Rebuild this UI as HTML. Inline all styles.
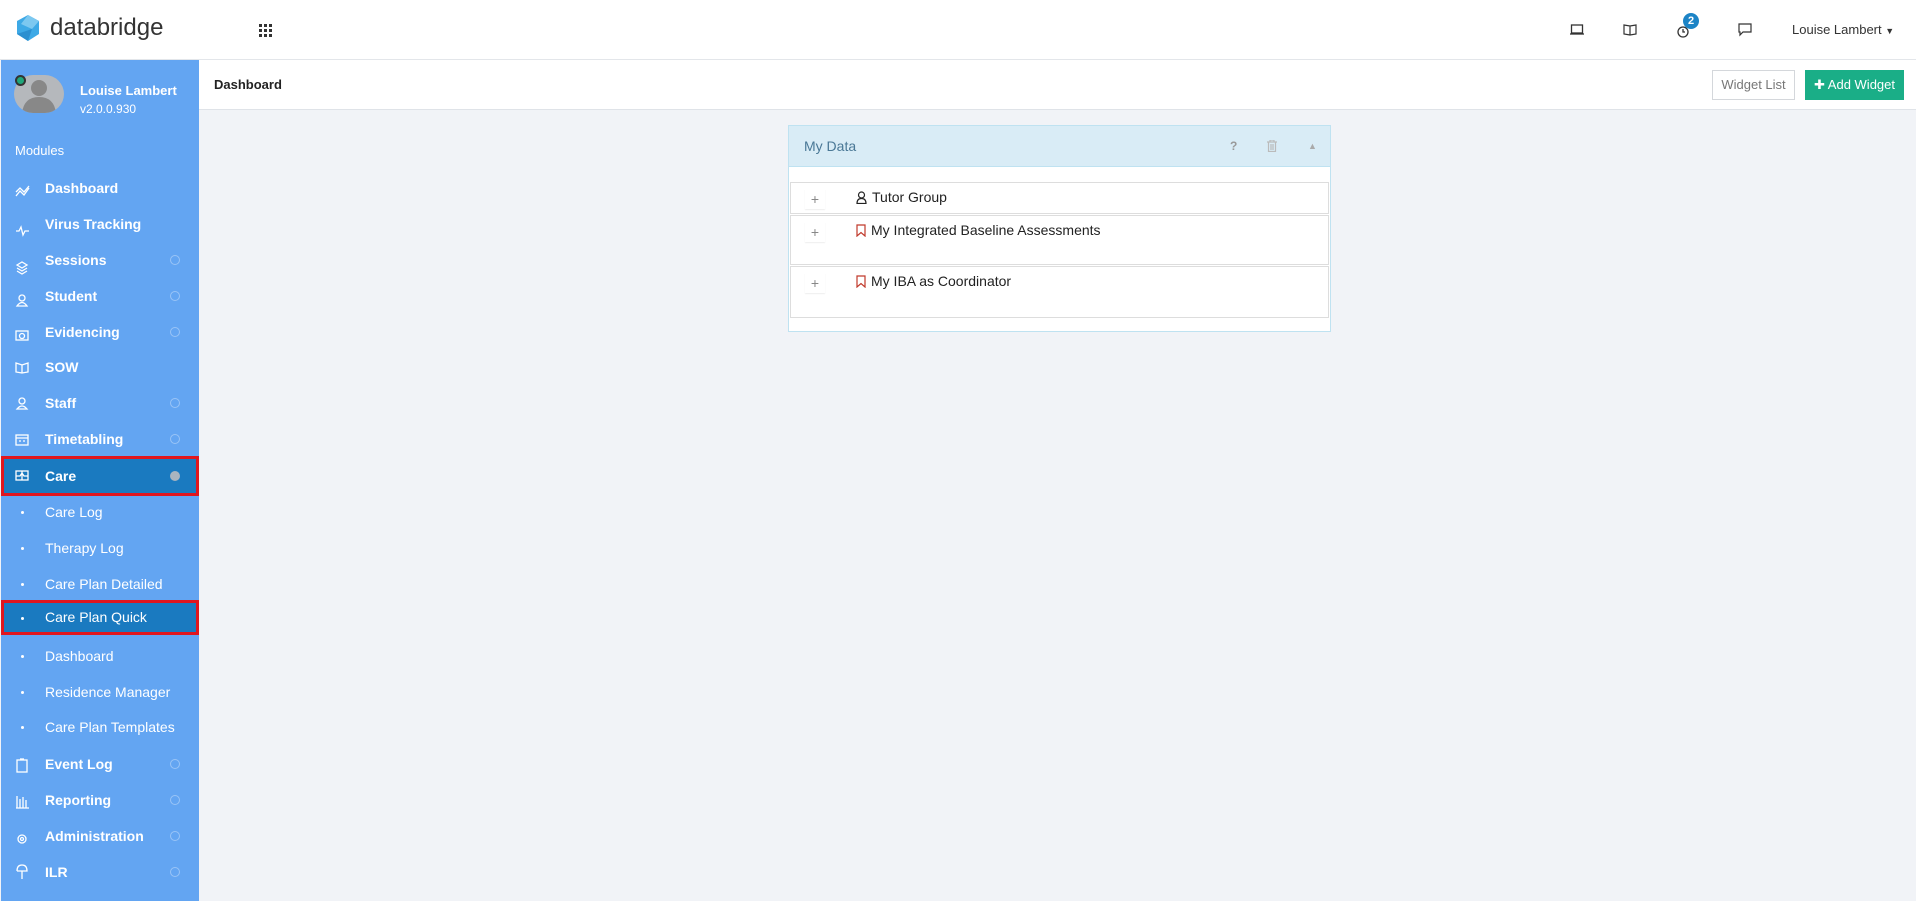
<!DOCTYPE html>
<html><head><meta charset="utf-8"><style>
*{box-sizing:border-box;margin:0;padding:0}
body{width:1916px;height:901px;overflow:hidden;background:#f1f3f7;font-family:"Liberation Sans",sans-serif;position:relative}
.top{position:absolute;left:0;top:0;width:1916px;height:60px;background:#fff;border-bottom:1px solid #e3e6ea}
.logo{position:absolute;left:17px;top:15px}
.brand{position:absolute;left:50px;top:14px;font-size:24px;color:#333}
.grid{position:absolute;left:259px;top:24px}
.side{position:absolute;left:1px;top:60px;width:198px;height:841px;background:#63a5f2;color:#fff}
.av{position:absolute;left:13px;top:15px;width:50px;height:38px;border-radius:19px;background:#b5b8bc;overflow:hidden}
.dot{position:absolute;left:14px;top:15px;width:11px;height:11px;border-radius:50%;background:#1fa67a;border:2px solid #333}
.uname{position:absolute;left:79px;top:23px;font-weight:bold;font-size:13px}
.ver{position:absolute;left:79px;top:42px;font-size:12px}
.mod{position:absolute;left:14px;top:83px;font-size:13px}
.it{position:absolute;left:0;width:198px;height:36px;line-height:36px;font-size:14px;font-weight:bold}
.it .t{position:absolute;left:44px}
.it .c{position:absolute;left:169px;top:13px;width:10px;height:10px;border-radius:50%;border:1px solid rgba(255,255,255,.35)}
.sub{font-weight:normal}
.sub .b{position:absolute;left:20px;top:17px;width:3px;height:3px;border-radius:50%;background:#fff}
.hl{background:#1a7ac0;outline:3px solid #e0161e;outline-offset:-3px}
.ph{position:absolute;left:199px;top:60px;width:1717px;height:50px;background:#fff;border-bottom:1px solid #dfe3e8}
.ph h1{position:absolute;left:15px;top:17px;font-size:13px;font-weight:bold;color:#222}
.btn1{position:absolute;left:1513px;top:10px;width:83px;height:30px;border:1px solid #d4d7db;background:#fff;color:#777;font-size:13px;text-align:center;line-height:28px}
.btn2{position:absolute;left:1606px;top:10px;width:99px;height:30px;background:#1aae87;color:#fff;font-size:13px;text-align:center;line-height:30px}
.w{position:absolute;left:788px;top:125px;width:543px;height:207px;background:#fff;border:1px solid #bfe2f1}
.wh{height:41px;background:#d9ecf6;border-bottom:1px solid #bfe2f1;font-size:14px;color:#4a7896;line-height:40px;padding-left:15px;position:relative}
.row{position:absolute;left:1px;width:539px;border:1px solid #ddd;background:#fff;font-size:14px;color:#222}
.pl{position:absolute;left:14px;top:6px;width:20px;height:20px;color:#888;font-size:14px;text-align:center;line-height:20px;box-shadow:0 1px 1px #eee}
.rt{position:absolute;left:65px;top:6px}
.rt svg{vertical-align:-2px;margin-right:5px}
</style></head><body>
<div class="top">
<svg class="logo" width="22" height="26" viewBox="0 0 22 26"><polygon points="11,0 22,6 22,19 11,26 0,19 0,6" fill="#3da9e6"/><polygon points="11,0 22,6 15,14 4,9" fill="#7cc8f0"/><polygon points="0,19 11,26 15,14" fill="#2b8fd0"/></svg>
<div class="brand">databridge</div>
<svg class="grid" width="14" height="14" viewBox="0 0 14 14" fill="#333"><rect x="0" y="0" width="3" height="3"/><rect x="5" y="0" width="3" height="3"/><rect x="10" y="0" width="3" height="3"/><rect x="0" y="5" width="3" height="3"/><rect x="5" y="5" width="3" height="3"/><rect x="10" y="5" width="3" height="3"/><rect x="0" y="10" width="3" height="3"/><rect x="5" y="10" width="3" height="3"/><rect x="10" y="10" width="3" height="3"/></svg>
<svg style="position:absolute;left:1570px;top:24px" width="14" height="11" fill="none" stroke="#333" stroke-width="1.3"><rect x="1.5" y="1" width="11" height="8"/><line x1="0" y1="10" x2="14" y2="10"/></svg>
<svg style="position:absolute;left:1623px;top:23px" width="14" height="13" fill="none" stroke="#333" stroke-width="1.2"><path d="M1 2L7 3L13 2V11L7 12L1 11Z M7 3V12"/></svg>
<svg style="position:absolute;left:1676px;top:24px" width="14" height="14" fill="none" stroke="#333" stroke-width="1.3"><circle cx="7" cy="8" r="5"/><path d="M7 5V8H9"/></svg>
<div style="position:absolute;left:1683px;top:13px;width:16px;height:16px;border-radius:50%;background:#1c84c6;color:#fff;font-size:11px;font-weight:bold;text-align:center;line-height:16px">2</div>
<svg style="position:absolute;left:1738px;top:23px" width="14" height="14" fill="none" stroke="#333" stroke-width="1.2"><path d="M1 1H13V9H5L2 12V9H1Z"/></svg>
<div style="position:absolute;left:1792px;top:22px;font-size:13px;color:#333">Louise Lambert <span style="font-size:9px">▼</span></div>
</div>
<div class="side">
<div class="av"><svg width="50" height="38"><circle cx="25" cy="13" r="8" fill="#888"/><path d="M8 38Q10 22 25 22Q40 22 42 38Z" fill="#888"/></svg></div>
<div class="dot"></div>
<div class="uname">Louise Lambert</div>
<div class="ver">v2.0.0.930</div>
<div class="mod">Modules</div>
<div class="it" style="top:110px"><span class="t">Dashboard</span></div>
<div class="it" style="top:146px"><span class="t">Virus Tracking</span></div>
<div class="it" style="top:182px"><span class="t">Sessions</span><span class="c"></span></div>
<div class="it" style="top:218px"><span class="t">Student</span><span class="c"></span></div>
<div class="it" style="top:254px"><span class="t">Evidencing</span><span class="c"></span></div>
<div class="it" style="top:289px"><span class="t">SOW</span></div>
<div class="it" style="top:325px"><span class="t">Staff</span><span class="c"></span></div>
<div class="it" style="top:361px"><span class="t">Timetabling</span><span class="c"></span></div>
<div class="it hl" style="top:396px;height:40px;line-height:40px"><span class="t">Care</span><span class="c" style="top:15px;background:#a9b4bf;border:none"></span></div>
<div class="it sub" style="top:434px"><span class="b"></span><span class="t">Care Log</span></div>
<div class="it sub" style="top:470px"><span class="b"></span><span class="t">Therapy Log</span></div>
<div class="it sub" style="top:506px"><span class="b"></span><span class="t">Care Plan Detailed</span></div>
<div class="it sub hl" style="top:540px;height:35px;line-height:35px"><span class="b"></span><span class="t">Care Plan Quick</span></div>
<div class="it sub" style="top:578px"><span class="b"></span><span class="t">Dashboard</span></div>
<div class="it sub" style="top:614px"><span class="b"></span><span class="t">Residence Manager</span></div>
<div class="it sub" style="top:649px"><span class="b"></span><span class="t">Care Plan Templates</span></div>
<div class="it" style="top:686px"><span class="t">Event Log</span><span class="c"></span></div>
<div class="it" style="top:722px"><span class="t">Reporting</span><span class="c"></span></div>
<div class="it" style="top:758px"><span class="t">Administration</span><span class="c"></span></div>
<div class="it" style="top:794px"><span class="t">ILR</span><span class="c"></span></div>
<svg style="position:absolute;left:14px;top:0" width="16" height="841" fill="none" stroke="#fff" stroke-width="1.3">
<g transform="translate(0,-59)">
<path d="M1 195L5 190L9 194L14 187M1 191L5 187L9 191L14 185"/>
<path d="M1 230H4L6 226L8 234L10 230H14"/>
<path d="M2 264L7 261L12 264L7 267Z M2 267L7 270L12 267 M2 270L7 273L12 270"/>
<circle cx="7" cy="297" r="3"/><path d="M2 305Q7 298 12 305Z"/>
<rect x="1" y="330" width="12" height="9"/><circle cx="7" cy="335" r="2.5"/>
<path d="M1 362L7 364L13 362V371L7 372L1 371Z M7 364V372"/>
<circle cx="7" cy="400" r="3"/><path d="M2 408Q7 402 12 408Z"/>
<rect x="1" y="434" width="12" height="10"/><path d="M1 437H13M4 440H6M8 440H10"/>
<rect x="1" y="470" width="12" height="9"/><path d="M1 475H5L7 472L9 475H13M7 470V479"/>
<rect x="2" y="759" width="10" height="12"/><path d="M5 758H9"/>
<path d="M2 807V795M5 807V798M8 807V796M11 807V799M1 807H14"/>
<circle cx="7" cy="838" r="4"/><circle cx="7" cy="838" r="1.5"/>
<path d="M2 870Q2 864 7 864Q12 864 12 870H2M7 870V878"/>
</g>
</svg>
</div>
<div class="ph"><h1>Dashboard</h1><div class="btn1">Widget List</div><div class="btn2">✚ Add Widget</div></div>
<div class="w">
<div class="wh">My Data<span style="position:absolute;left:441px;color:#999;font-weight:bold;font-size:12px">?</span>
<svg style="position:absolute;left:478px;top:14px" width="10" height="12" fill="none" stroke="#bbb" stroke-width="1.2"><path d="M0 2H10M3 2V0H7V2M1.5 2V11.5H8.5V2M4 4V10M6 4V10"/></svg>
<span style="position:absolute;left:519px;color:#aaa;font-size:9px">▲</span></div>
<div class="row" style="top:56px;height:32px"><div class="pl">+</div><div class="rt"><svg width="11" height="13" fill="none" stroke="#222" stroke-width="1.2"><circle cx="5.5" cy="4" r="3"/><path d="M1 12.5Q1 7.5 5.5 7.5Q10 7.5 10 12.5Z"/></svg>Tutor Group</div></div>
<div class="row" style="top:89px;height:50px"><div class="pl">+</div><div class="rt"><svg width="10" height="13" fill="none" stroke="#c0392b" stroke-width="1.2"><path d="M1 1H9V12L5 8.5L1 12Z"/></svg>My Integrated Baseline Assessments</div></div>
<div class="row" style="top:140px;height:52px"><div class="pl">+</div><div class="rt"><svg width="10" height="13" fill="none" stroke="#c0392b" stroke-width="1.2"><path d="M1 1H9V12L5 8.5L1 12Z"/></svg>My IBA as Coordinator</div></div>
</div>
</body></html>
